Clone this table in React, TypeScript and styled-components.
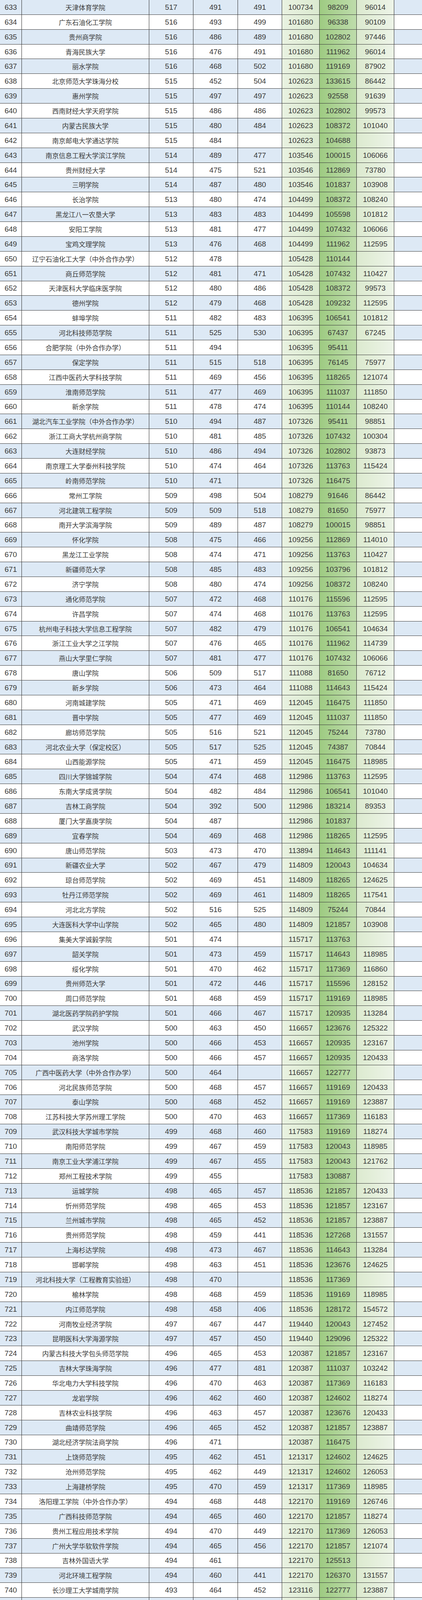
import React from 'react';
import styled, { createGlobalStyle } from 'styled-components';

// rank starts at 633, "-" means an empty cell
const raw = `天津体育学院 517 491 491 100734 98209 96014
广东石油化工学院 516 493 499 101680 96338 90109
贵州商学院 516 486 489 101680 102802 97446
青海民族大学 516 476 491 101680 111962 96014
丽水学院 516 468 502 101680 119169 87902
北京师范大学珠海分校 515 452 504 102623 133615 86442
惠州学院 515 497 497 102623 92558 91639
西南财经大学天府学院 515 486 486 102623 102802 99573
内蒙古民族大学 515 480 484 102623 108372 101040
南京邮电大学通达学院 515 484 - 102623 104688 -
南京信息工程大学滨江学院 514 489 477 103546 100015 106066
贵州财经大学 514 475 521 103546 112869 73780
三明学院 514 487 480 103546 101837 103908
长治学院 513 480 474 104499 108372 108240
黑龙江八一农垦大学 513 483 483 104499 105598 101812
安阳工学院 513 481 477 104499 107432 106066
宝鸡文理学院 513 476 468 104499 111962 112595
辽宁石油化工大学（中外合作办学） 512 478 - 105428 110144 -
商丘师范学院 512 481 471 105428 107432 110427
天津医科大学临床医学院 512 480 486 105428 108372 99573
德州学院 512 479 468 105428 109232 112595
蚌埠学院 511 482 483 106395 106541 101812
河北科技师范学院 511 525 530 106395 67437 67245
合肥学院（中外合作办学） 511 494 - 106395 95411 -
保定学院 511 515 518 106395 76145 75977
江西中医药大学科技学院 511 469 456 106395 118265 121074
淮南师范学院 511 477 469 106395 111037 111850
新余学院 511 478 474 106395 110144 108240
湖北汽车工业学院（中外合作办学） 510 494 487 107326 95411 98851
浙江工商大学杭州商学院 510 481 485 107326 107432 100304
大连财经学院 510 486 494 107326 102802 93873
南京理工大学泰州科技学院 510 474 464 107326 113763 115424
岭南师范学院 510 471 - 107326 116475 -
常州工学院 509 498 504 108279 91646 86442
河北建筑工程学院 509 509 518 108279 81650 75977
南开大学滨海学院 509 489 487 108279 100015 98851
怀化学院 508 475 466 109256 112869 114010
黑龙江工业学院 508 474 471 109256 113763 110427
新疆师范大学 508 485 483 109256 103796 101812
济宁学院 508 480 474 109256 108372 108240
通化师范学院 507 472 468 110176 115596 112595
许昌学院 507 474 468 110176 113763 112595
杭州电子科技大学信息工程学院 507 482 479 110176 106541 104634
浙江工业大学之江学院 507 476 465 110176 111962 114739
燕山大学里仁学院 507 481 477 110176 107432 106066
唐山学院 506 509 517 111088 81650 76712
新乡学院 506 473 464 111088 114643 115424
河南城建学院 505 471 469 112045 116475 111850
晋中学院 505 477 469 112045 111037 111850
廊坊师范学院 505 516 521 112045 75244 73780
河北农业大学（保定校区） 505 517 525 112045 74387 70844
山西能源学院 505 471 459 112045 116475 118985
四川大学锦城学院 504 474 468 112986 113763 112595
东南大学成贤学院 504 482 484 112986 106541 101040
吉林工商学院 504 392 500 112986 183214 89353
厦门大学嘉庚学院 504 487 - 112986 101837 -
宜春学院 504 469 468 112986 118265 112595
唐山师范学院 503 473 470 113894 114643 111141
新疆农业大学 502 467 479 114809 120043 104634
琼台师范学院 502 469 451 114809 118265 124625
牡丹江师范学院 502 469 461 114809 118265 117541
河北北方学院 502 516 525 114809 75244 70844
大连医科大学中山学院 502 465 480 114809 121857 103908
集美大学诚毅学院 501 474 - 115717 113763 -
韶关学院 501 473 459 115717 114643 118985
绥化学院 501 470 462 115717 117369 116860
贵州师范大学 501 472 446 115717 115596 128152
周口师范学院 501 468 459 115717 119169 118985
湖北医药学院药护学院 501 466 467 115717 120935 113284
武汉学院 500 463 450 116657 123676 125322
池州学院 500 466 453 116657 120935 123167
商洛学院 500 466 457 116657 120935 120433
广西中医药大学（中外合作办学） 500 464 - 116657 122777 -
河北民族师范学院 500 468 457 116657 119169 120433
泰山学院 500 468 452 116657 119169 123887
江苏科技大学苏州理工学院 500 470 463 116657 117369 116183
武汉科技大学城市学院 499 468 460 117583 119169 118274
南阳师范学院 499 467 459 117583 120043 118985
南京工业大学浦江学院 499 467 455 117583 120043 121762
郑州工程技术学院 499 455 - 117583 130887 -
运城学院 498 465 457 118536 121857 120433
忻州师范学院 498 465 453 118536 121857 123167
兰州城市学院 498 465 452 118536 121857 123887
贵州师范学院 498 459 441 118536 127268 131557
上海杉达学院 498 473 467 118536 114643 113284
邯郸学院 498 463 451 118536 123676 124625
河北科技大学（工程教育实验班） 498 470 - 118536 117369 -
榆林学院 498 468 459 118536 119169 118985
内江师范学院 498 458 406 118536 128172 154572
河南牧业经济学院 497 467 447 119440 120043 127452
昆明医科大学海源学院 497 457 450 119440 129096 125322
内蒙古科技大学包头师范学院 496 465 453 120387 121857 123167
吉林大学珠海学院 496 477 481 120387 111037 103242
华北电力大学科技学院 496 470 463 120387 117369 116183
龙岩学院 496 462 460 120387 124602 118274
吉林农业科技学院 496 463 457 120387 123676 120433
曲靖师范学院 496 465 452 120387 121857 123887
湖北经济学院法商学院 496 471 - 120387 116475 -
上饶师范学院 495 462 451 121317 124602 124625
沧州师范学院 495 462 449 121317 124602 126053
上海建桥学院 495 470 459 121317 117369 118985
洛阳理工学院（中外合作办学） 494 468 448 122170 119169 126746
广西科技师范学院 494 465 460 122170 121857 118274
贵州工程应用技术学院 494 470 449 122170 117369 126053
广州大学华软软件学院 494 465 456 122170 121857 121074
吉林外国语大学 494 461 - 122170 125513 -
河北环境工程学院 494 460 441 122170 126370 131557
长沙理工大学城南学院 493 464 452 123116 122777 123887
天津财经大学珠江学院 493 469 460 123116 118265 118274
宁夏师范学院 493 453 392 123116 132669 163040
四川文理学院 493 458 457 123116 128172 120433
南昌工程学院（中外合作办学） 493 493 483 123116 96338 101812
鞍山师范学院 493 459 431 123116 127268 138428
重庆文理学院（中外合作办学） 493 464 - 123116 122777 -
天水师范学院 493 452 449 123116 133615 126053
中国计量大学现代科技学院 492 480 478 124042 108372 105342
平顶山学院 492 461 452 124042 125513 123887`;

const rows = raw.split('\n').map((line) => line.trim().split(/\s+/).map((v) => (v === '-' ? '' : v)));

type Tone = 'plain' | 'soft' | 'deep' | 'fade';

const tones: Record<Tone, string> = {
  plain: 'transparent',
  soft: 'linear-gradient(to right, #e9f2e1, #dbead0)',
  deep: 'linear-gradient(to right, #9ecb82, #bedcab)',
  fade: 'linear-gradient(to right, #dceacf, #edf4e8)',
};

const ROW_H = 4431 / 117;

const GlobalStyle = createGlobalStyle`
  html, body {
    margin: 0;
    padding: 0;
    background: #ffffff;
  }
`;

export default function App() {
  return (
    <>
      <GlobalStyle />
      <Sheet>
        {rows.map((r, i) => (
          <Line key={i} $striped={i % 2 === 0}>
            <Cell $num>{633 + i}</Cell>
            <Cell>{r[0]}</Cell>
            <Cell $num>{r[1]}</Cell>
            <Cell $num>{r[2]}</Cell>
            <Cell $num>{r[3]}</Cell>
            <Cell $num $tone="soft">{r[4]}</Cell>
            <Cell $num $tone="deep">{r[5]}</Cell>
            <Cell $num $tone="fade">{r[6]}</Cell>
            <Cell $last />
          </Line>
        ))}
      </Sheet>
    </>
  );
}

const Sheet = styled.div`
  width: 1080px;
  height: 4431px;
  overflow: hidden;
  display: grid;
  grid-template-rows: repeat(${rows.length}, minmax(0, 1fr));
`;

const Line = styled.div<{ $striped: boolean }>`
  display: grid;
  grid-template-columns: 56px 326px 113px 114px 113px 96px 95px 96px 1fr;
  height: ${ROW_H}px;
  background: ${(p) => (p.$striped ? '#dde9f5' : '#ffffff')};
  border-bottom: 1px solid #3b3b3b;
  box-sizing: border-box;
  min-height: 0;
  overflow: hidden;
`;

const Cell = styled.div<{ $num?: boolean; $tone?: Tone; $last?: boolean }>`
  display: flex;
  align-items: center;
  justify-content: center;
  min-height: 0;
  white-space: nowrap;
  overflow: hidden;
  line-height: 1;
  border-right: ${(p) => (p.$last ? 'none' : '1px solid #2a2a2a')};
  background: ${(p) => tones[p.$tone || 'plain']};
  color: #3a3a3a;
  font-family: ${(p) =>
    p.$num
      ? '"Liberation Sans Narrow", "Liberation Sans", "Noto Sans CJK SC", sans-serif'
      : '"Noto Sans CJK SC", "Noto Sans", sans-serif'};
  font-size: ${(p) => (p.$num ? '19px' : '17px')};
  font-weight: 400;
`;
